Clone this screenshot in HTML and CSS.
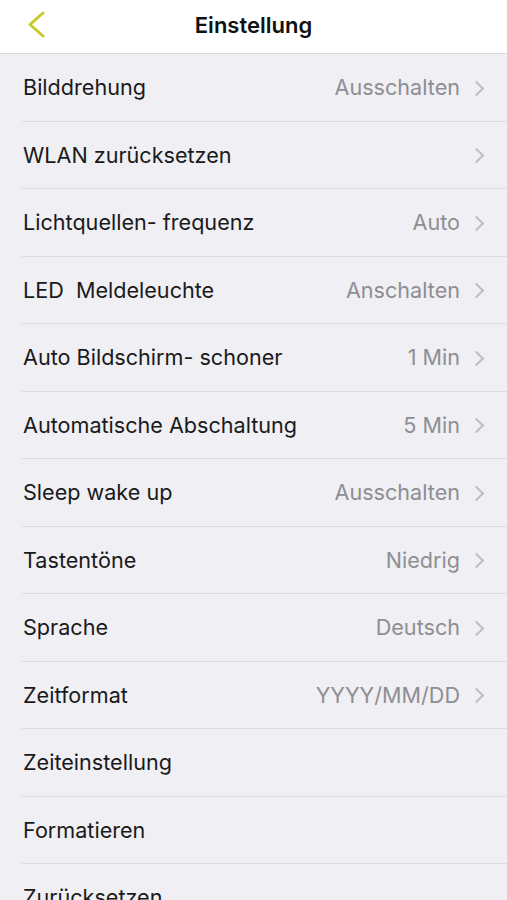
FILE: index.html
```html
<!DOCTYPE html>
<html lang="de">
<head>
<meta charset="utf-8">
<title>Einstellung</title>
<link rel="stylesheet" href="styles.css">
</head>
<body>
<div class="app">
  <header class="nav">
    <button class="back" aria-label="Zurück">
      <svg width="20" height="27" viewBox="0 0 20 27"><path d="M17 2 L4 13.5 L17 25" fill="none" stroke="#c9c928" stroke-width="3" stroke-linecap="round" stroke-linejoin="round"/></svg>
    </button>
    <h1 class="title">Einstellung</h1>
  </header>
  <ul class="list">
    <li class="row"><span class="label">Bilddrehung</span><span class="value">Ausschalten</span><span class="chev"></span></li>
    <li class="row"><span class="label">WLAN zurücksetzen</span><span class="value"></span><span class="chev"></span></li>
    <li class="row"><span class="label">Lichtquellen- frequenz</span><span class="value">Auto</span><span class="chev"></span></li>
    <li class="row"><span class="label">LED&nbsp; Meldeleuchte</span><span class="value">Anschalten</span><span class="chev"></span></li>
    <li class="row"><span class="label">Auto Bildschirm- schoner</span><span class="value">1 Min</span><span class="chev"></span></li>
    <li class="row"><span class="label">Automatische Abschaltung</span><span class="value">5 Min</span><span class="chev"></span></li>
    <li class="row"><span class="label">Sleep wake up</span><span class="value">Ausschalten</span><span class="chev"></span></li>
    <li class="row"><span class="label">Tastentöne</span><span class="value">Niedrig</span><span class="chev"></span></li>
    <li class="row"><span class="label">Sprache</span><span class="value">Deutsch</span><span class="chev"></span></li>
    <li class="row"><span class="label">Zeitformat</span><span class="value">YYYY/MM/DD</span><span class="chev"></span></li>
    <li class="row"><span class="label">Zeiteinstellung</span></li>
    <li class="row"><span class="label">Formatieren</span></li>
    <li class="row"><span class="label">Zurücksetzen</span></li>
  </ul>
</div>
</body>
</html>
```

FILE: styles.css
```css
* { box-sizing: border-box; }
html, body {
  margin: 0;
  padding: 0;
  background: #efeff4;
  font-family: Inter, "Noto Sans", "Liberation Sans", sans-serif;
  -webkit-font-smoothing: antialiased;
}
.app {
  width: 507px;
  height: 900px;
  overflow: hidden;
}
.nav {
  height: 54px;
  background: #ffffff;
  border-bottom: 1px solid #d9d9dc;
  display: flex;
  align-items: center;
  justify-content: center;
  position: relative;
}
.back {
  position: absolute;
  left: 26px;
  top: 11px;
  background: none;
  border: 0;
  padding: 0;
  width: 20px;
  height: 27px;
  display: flex;
}
.title {
  margin: 0;
  font-size: 22px;
  font-weight: 600;
  color: #111111;
  letter-spacing: 0;
  margin-top: -4px;
}
.list {
  list-style: none;
  margin: 0;
  padding: 0;
}
.row {
  height: 67.5px;
  margin-left: 22px;
  padding-right: 24px;
  border-bottom: 1px solid #dcdce0;
  display: flex;
  align-items: center;
  font-size: 21.6px;
  color: #1a1a1a;
}
.label {
  flex: 1;
  padding-left: 1px;
  white-space: nowrap;
}
.value {
  color: #8e8e93;
  margin-right: 14px;
  white-space: nowrap;
}
.chev {
  width: 9px;
  height: 15px;
  display: block;
  position: relative;
}
.chev::before {
  content: "";
  position: absolute;
  left: -3px;
  top: 3px;
  width: 9px;
  height: 9px;
  border-top: 2px solid #bdbdc2;
  border-right: 2px solid #bdbdc2;
  transform: rotate(45deg);
}
```
